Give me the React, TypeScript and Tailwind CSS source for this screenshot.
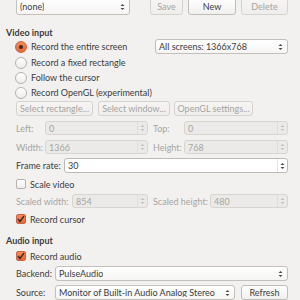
import React from "react";

const text = "text-[#3c3c3c]";
const dim = "text-[#a7a5a1]";

function Arrows({ disabled }: { disabled?: boolean }) {
  const c = disabled ? "#c2c0bc" : "#4a4a4a";
  return (
    <svg width="5" height="8" viewBox="0 0 5 8" className="shrink-0">
      <path d="M0.5 3 L2.5 1 L4.5 3 Z" fill={c} />
      <path d="M0.5 5 L2.5 7 L4.5 5 Z" fill={c} />
    </svg>
  );
}

function Combo({ label, className }: { label: string; className: string }) {
  return (
    <div
      className={`flex items-center justify-between rounded-[3px] border border-[#c3c0bc] bg-gradient-to-b from-white to-[#f6f5f4] pl-[3px] pr-[4px] ${text} ${className}`}
    >
      <span className="truncate">{label}</span>
      <Arrows />
    </div>
  );
}

function Button({ label, disabled, className }: { label: string; disabled?: boolean; className: string }) {
  return (
    <div
      className={`flex items-center justify-center rounded-[3px] border ${
        disabled ? "border-[#d6d3cf] from-[#f6f5f4] to-[#efeeed] " + dim : "border-[#c0bdb9] from-white to-[#f1f0ef] " + text
      } bg-gradient-to-b ${className}`}
    >
      {label}
    </div>
  );
}

function Spin({ value, disabled, className }: { value: string; disabled?: boolean; className: string }) {
  return (
    <div
      className={`flex items-center rounded-[3px] border ${
        disabled ? "border-[#d8d5d1] bg-[#ebeae8] " + dim : "border-[#bdbab6] bg-white " + text
      } ${className}`}
    >
      <span className="flex-1 pl-[3px]">{value}</span>
      <div className={`flex h-full w-[10px] items-center justify-center border-l ${disabled ? "border-[#e0deda]" : "border-[#e6e4e1]"}`}>
        <Arrows disabled={disabled} />
      </div>
    </div>
  );
}

function Radio({ label, checked, disabled }: { label: string; checked?: boolean; disabled?: boolean }) {
  return (
    <div className="flex h-[17px] items-center pl-[15px]">
      <div
        className={`flex h-[12px] w-[12px] items-center justify-center rounded-full border ${
          checked
            ? "border-[#d0643a] bg-gradient-to-b from-[#f5895a] to-[#e5683a]"
            : "border-[#b5b2ae] bg-gradient-to-b from-white to-[#eeedec]"
        }`}
      >
        {checked && <div className="h-[4px] w-[4px] rounded-full bg-[#3a2a22]" />}
      </div>
      <span className={`ml-[4px] ${disabled ? dim : text}`}>{label}</span>
    </div>
  );
}

function Check({ label, checked }: { label: string; checked?: boolean }) {
  return (
    <div className="flex h-[16px] items-center pl-[16px]">
      <div
        className={`flex h-[10px] w-[10px] items-center justify-center rounded-[2px] border ${
          checked
            ? "border-[#d0643a] bg-gradient-to-b from-[#f58a5b] to-[#e5683a]"
            : "border-[#b5b2ae] bg-gradient-to-b from-white to-[#eeedec]"
        }`}
      >
        {checked && (
          <svg width="8" height="8" viewBox="0 0 8 8">
            <path d="M1 4 L3 6.5 L7 1" stroke="#3a2a22" strokeWidth="1.4" fill="none" />
          </svg>
        )}
      </div>
      <span className={`ml-[4px] ${text}`}>{label}</span>
    </div>
  );
}

export default function App() {
  return (
    <div
      className="flex h-[300px] w-[300px] flex-col overflow-hidden bg-[#f2f1f0] text-[9px] leading-none"
      style={{ fontFamily: "Lato, 'Open Sans', sans-serif" }}
    >
      <div className="-mt-[2px] flex h-[17px] shrink-0 pl-[16px]">
        <Combo label="(none)" className="w-[114px]" />
        <Button label="Save" disabled className="ml-[20px] w-[33px]" />
        <Button label="New" className="ml-[5px] w-[48px]" />
        <Button label="Delete" disabled className="ml-[5px] w-[47px]" />
      </div>

      <div className={`mt-[11px] flex h-[12px] shrink-0 items-center pl-[6px] font-bold ${text}`}>Video input</div>

      <div className="flex shrink-0 items-center justify-between pr-[12px]">
        <Radio label="Record the entire screen" checked />
        <Combo label="All screens: 1366x768" className="h-[15px] w-[133px]" />
      </div>
      <Radio label="Record a fixed rectangle" />
      <Radio label="Follow the cursor" />
      <Radio label="Record OpenGL (experimental)" />

      <div className="mt-[1px] flex h-[15px] shrink-0 pl-[16px]">
        <Button label="Select rectangle..." disabled className="w-[77px]" />
        <Button label="Select window..." disabled className="ml-[5px] w-[72px]" />
        <Button label="OpenGL settings..." disabled className="ml-[4px] w-[79px]" />
      </div>

      <div className="mt-[5px] flex h-[14px] shrink-0 items-stretch pl-[16px]">
        <span className={`flex w-[29px] items-center ${dim}`}>Left:</span>
        <Spin value="0" disabled className="w-[103px]" />
        <span className={`ml-[5px] flex w-[31px] items-center ${dim}`}>Top:</span>
        <Spin value="0" disabled className="w-[104px]" />
      </div>

      <div className="mt-[5px] flex h-[14px] shrink-0 items-stretch pl-[16px]">
        <span className={`flex w-[29px] items-center ${dim}`}>Width:</span>
        <Spin value="1366" disabled className="w-[103px]" />
        <span className={`ml-[5px] flex w-[31px] items-center ${dim}`}>Height:</span>
        <Spin value="768" disabled className="w-[104px]" />
      </div>

      <div className="mt-[4px] flex h-[15px] shrink-0 items-stretch pl-[16px]">
        <span className={`flex w-[48px] items-center ${text}`}>Frame rate:</span>
        <Spin value="30" className="w-[224px]" />
      </div>

      <div className="mt-[3px]">
        <Check label="Scale video" />
      </div>

      <div className="mt-[2px] flex h-[14px] shrink-0 items-stretch pl-[16px]">
        <span className={`flex w-[56px] items-center ${dim}`}>Scaled width:</span>
        <Spin value="854" disabled className="w-[76px]" />
        <span className={`ml-[5px] flex w-[57px] items-center ${dim}`}>Scaled height:</span>
        <Spin value="480" disabled className="w-[78px]" />
      </div>

      <div className="mt-[3px]">
        <Check label="Record cursor" checked />
      </div>

      <div className={`mt-[7px] flex h-[12px] shrink-0 items-center pl-[6px] font-bold ${text}`}>Audio input</div>

      <div className="mt-[2px]">
        <Check label="Record audio" checked />
      </div>

      <div className="mt-[2px] flex h-[15px] shrink-0 items-stretch pl-[16px]">
        <span className={`flex w-[39px] items-center ${text}`}>Backend:</span>
        <Combo label="PulseAudio" className="w-[233px]" />
      </div>

      <div className="mt-[4px] flex h-[15px] shrink-0 items-stretch pl-[16px]">
        <span className={`flex w-[39px] items-center ${text}`}>Source:</span>
        <Combo label="Monitor of Built-in Audio Analog Stereo" className="w-[180px]" />
        <Button label="Refresh" className="ml-[6px] w-[47px]" />
      </div>
    </div>
  );
}
